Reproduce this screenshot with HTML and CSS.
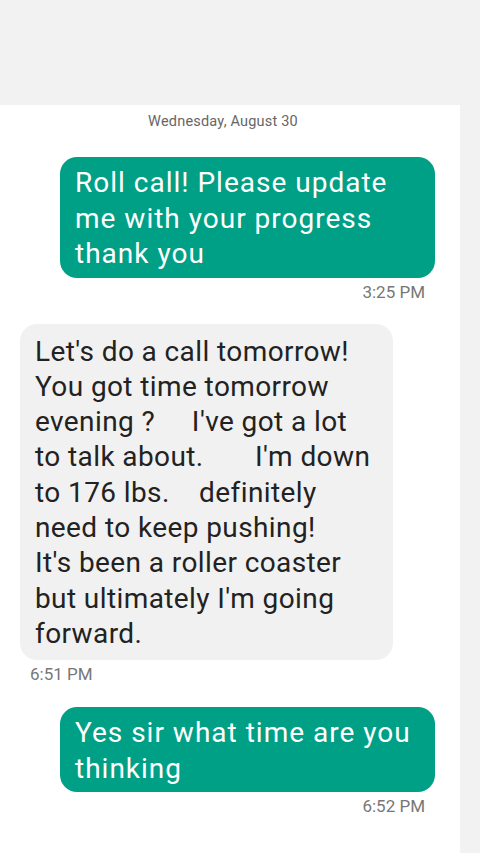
FILE: index.html
```html
<!DOCTYPE html>
<html lang="en">
<head>
  <meta charset="UTF-8" />
  <meta name="viewport" content="width=device-width, initial-scale=1.0"/>
  <title>Messages</title>
  <link rel="stylesheet" href="styles.css">
</head>

<body>

  <div class="top-space"></div>

  <!-- Conversation -->
  <main class="thread">
    <div class="date">Wednesday, August 30</div>

    <div class="msg sent">
      <div class="bubble">Roll call! Please update<br>me with your progress<br>thank you</div>
      <div class="time">3:25 PM</div>
    </div>

    <div class="msg received">
      <div class="bubble">Let's do a call tomorrow!<br>You got time tomorrow<br>evening ? &nbsp;&nbsp;&nbsp;&nbsp;I've got a lot<br>to talk about. &nbsp;&nbsp;&nbsp;&nbsp;&nbsp;&nbsp;I'm down<br>to 176 lbs. &nbsp;&nbsp;&nbsp;definitely<br>need to keep pushing!<br>It's been a roller coaster<br>but ultimately I'm going<br>forward.</div>
      <div class="time">6:51 PM</div>
    </div>

    <div class="msg sent">
      <div class="bubble">Yes sir what time are you<br>thinking</div>
      <div class="time">6:52 PM</div>
    </div>
  </main>

</body>
</html>
```

FILE: styles.css
```css
body {
  margin: 0;
  font-family: Roboto, "Liberation Sans", Arial, sans-serif;
  background: #f2f2f2;
}

.top-space {
  height: 105px;
}

.thread {
  width: 460px;
  min-height: 748px;
  background: #ffffff;
  padding-top: 8px;
  box-sizing: border-box;
}

.date {
  text-align: center;
  font-size: 14.5px;
  line-height: 17px;
  letter-spacing: 0.2px;
  color: #666666;
  padding-right: 14px;
  margin-bottom: 27px;
}

.msg {
  display: flex;
  flex-direction: column;
}

.bubble {
  font-size: 28px;
  white-space: nowrap;
  border-radius: 17px;
}

.time {
  font-size: 17px;
  line-height: 20px;
  color: #777777;
  margin-top: 4px;
}

/* Outgoing messages */
.sent {
  align-items: flex-end;
  padding-right: 25px;
  margin-bottom: 22px;
}

.sent .bubble {
  width: 375px;
  box-sizing: border-box;
  background: #00a086;
  color: #ffffff;
  line-height: 35.5px;
  letter-spacing: 1px;
  padding: 8px 15px 6px;
}

.sent .time {
  margin-right: 10px;
}

/* Incoming messages */
.received {
  align-items: flex-start;
  padding-left: 20px;
  margin-bottom: 23px;
}

.received .bubble {
  width: 373px;
  box-sizing: border-box;
  background: #f1f1f1;
  color: #222222;
  line-height: 35.3px;
  letter-spacing: 0.4px;
  padding: 10px 15px 9px;
}

.received .time {
  margin-left: 10px;
}
```
